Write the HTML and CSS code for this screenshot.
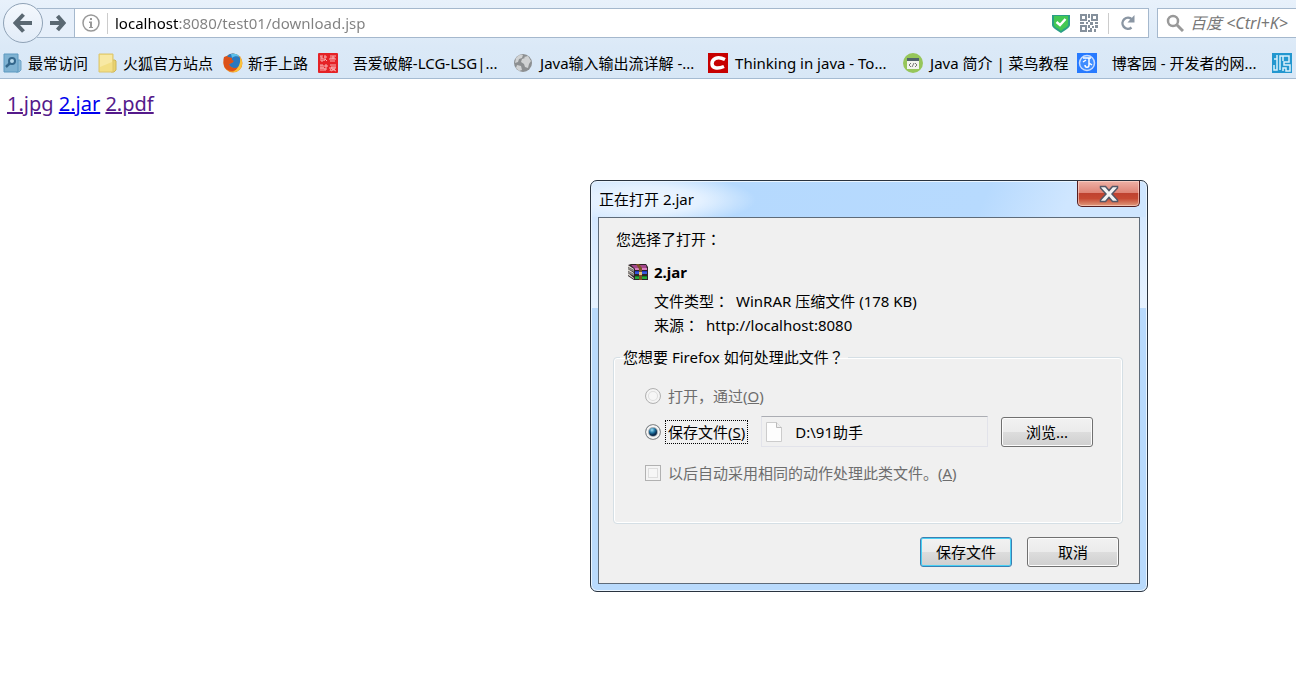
FILE: index.html
```html
<!DOCTYPE html>
<html lang="zh-CN">
<head>
    <meta charset="UTF-8">
    <meta name="viewport" content="width=device-width, initial-scale=1.0">
    <title>download.jsp</title>
    <link rel="stylesheet" href="styles.css">
</head>
<body>
    <header class="browser">
        <div class="toolbar">
            <button class="back" aria-label="后退">
                <svg width="20" height="20" viewBox="0 0 20 20"><path d="M10.500 1.500 2.500 10l8 8.500M3 10h16" fill="none" stroke="#5a6872" stroke-width="4"/></svg>
            </button>
            <button class="forward" aria-label="前进">
                <svg width="17" height="18" viewBox="0 0 17 18"><path d="M8.500 2l6 7-6 7M14 9H1" fill="none" stroke="#5a6872" stroke-width="4"/></svg>
            </button>
            <div class="urlbar">
                <svg width="18" height="18" viewBox="0 0 18 18"><circle cx="9" cy="9" r="8" fill="none" stroke="#999" stroke-width="1.500"/><path d="M8 4h2v2H8zM7 7.500h3V13h1v1H7v-1h1V9H7z" fill="#999"/></svg>
                <span class="divider"></span>
                <input class="url" type="text" aria-label="地址" value="localhost:8080/test01/download.jsp">
                <div class="url-icons">
                    <svg width="18" height="19" viewBox="0 0 18 19"><path d="M0 1h18v10c0 3-5 5-9 8-4-3-9-5-9-8z" fill="#2a9f86"/><path d="M2 2h14v9c0 2-4 3-7 6-3-3-7-4-7-6z" fill="#42c853"/><path d="M4.500 8 8 11l5.500-6" fill="none" stroke="#fff" stroke-width="2.500"/></svg>
                    <svg width="18" height="18" viewBox="0 0 18 18"><path d="M1 1h5v5H1zM12 1h5v5h-5zM1 12h5v5H1z" fill="none" stroke="#85909c" stroke-width="2"/><path d="M8 0h2v4H8zM8 6h2v2H8zM0 8h4v2H0zM6 8h2v2H6zM10 8h3v3h-3zM15 8h3v2h-3zM8 11h2v3H8zM12 12h2v2h-2zM15 11h3v3h-3zM10 14h2v4h-2zM8 16h2v2H8zM14 15h2v3h-2z" fill="#85909c"/></svg>
                    <span class="divider"></span>
                </div>
                <button class="reload" aria-label="刷新">
                    <svg width="16" height="16" viewBox="0 0 16 16"><path d="M11.500 12.500A5.500 5.500 0 1 1 12 4.500" fill="none" stroke="#8a96a3" stroke-width="2.500"/><path d="M14.500 0v7.500H7.500z" fill="#8a96a3"/></svg>
                </button>
            </div>
            <div class="search">
                <svg width="18" height="18" viewBox="0 0 18 18"><circle cx="7" cy="7" r="5" fill="none" stroke="#999" stroke-width="2.500"/><path d="m11 11 6 6" stroke="#999" stroke-width="3"/></svg>
                <input type="text" aria-label="搜索" placeholder="百度 &lt;Ctrl+K&gt;">
            </div>
        </div>
        <nav class="bookmarks">
            <a href="#" class="bookmark">
                <svg width="20" height="20" viewBox="0 0 20 20"><path d="M13 7h4l1 1v9l-2 2h-3z" fill="#8db9d5" stroke="#6fa5c8"/><path d="M1 1h14v18H1z" fill="#7fb2d2" stroke="#5c99c0"/><circle cx="9" cy="8" r="3" fill="#b8d9ec" stroke="#34678c" stroke-width="2"/><path d="m7 10-4 4" stroke="#34678c" stroke-width="2.500"/></svg>
                <span>最常访问</span>
            </a>
            <a href="#" class="bookmark">
                <svg width="20" height="20" viewBox="0 0 20 20"><path d="M13 7h4l1 1v9l-2 2h-3z" fill="#e9d26d" stroke="#cdb65b"/><path d="M1 1h14v18H1z" fill="#f3df85" stroke="#dcc56c"/><path d="M2 2h12v7L2 14z" fill="#f8e9a4"/></svg>
                <span>火狐官方站点</span>
            </a>
            <a href="#" class="bookmark">
                <svg width="20" height="20" viewBox="0 0 20 20"><circle cx="10" cy="10" r="9.500" fill="#f08a24"/><path d="M7 1c5-2 11 2 11 8 0 4-3 6-6 6-4 0-6-2-6-4l4-2-2-4-4-1c0-1 1-2 3-3z" fill="#2b78bf"/><path d="M8 1c4-1 7 0 9 3-3-1-6-1-8 1z" fill="#5cc0ea"/><path d="M1 4l3-1 1 1 4 1v2l2 1-2 2-3 1c1 4 6 5 10 3-3 5-10 5-14 1C0 12 0 7 1 4z" fill="#dc5119"/><path d="M17 4c3 4 3 10-1 13-2 2-4 2-6 2 5-3 8-8 7-15z" fill="#fbc33a"/></svg>
                <span>新手上路</span>
            </a>
            <a href="#" class="bookmark bookmark-long">
                <svg width="20" height="20" viewBox="0 0 20 20"><rect width="20" height="20" rx="1" fill="#e52226"/><path d="M2 3h3M3 3v5h2V5H3M6 4h3M7 2v4l2 2M7 6 6 8M12 3h6M15 3v3M12 5h5M11 6h7M12 8h5M2 12h3M3 12v6M2 15h4M5 12v6M7 12h2v2H7zM6 16h3M7 15v3M12 12h6M13 14h5M11 15h7M14 14l-2 4M14 16h3l-4 2M14 16l4 2" fill="none" stroke="#f9b1b1"/></svg>
                <span>&nbsp; 吾爱破解-LCG-LSG|...</span>
            </a>
            <a href="#" class="bookmark bookmark-long">
                <svg width="20" height="20" viewBox="0 0 20 20"><circle cx="10" cy="10" r="9" fill="#8c8f91"/><path d="M3 5c2-3 5-4 7-3l-1 3-3 1-1 3-3 1zM11 4l4-1 3 5-2 3-1 4-3-1-1-3-3-2 1-3 3-1zM4 12l4 1 1 4-3 1-3-3z" fill="#d0d2d3"/></svg>
                <span>Java输入输出流详解 -...</span>
            </a>
            <a href="#" class="bookmark bookmark-long">
                <svg width="20" height="20" viewBox="0 0 20 20"><path d="M0 0h20v20H0z" fill="#c70000"/><path d="M17 6.500C9 2.500 4 6 4 10.500s5 6 12 3" fill="none" stroke="#fff" stroke-width="3.500"/></svg>
                <span>Thinking in java - To...</span>
            </a>
            <a href="#" class="bookmark bookmark-wide">
                <svg width="20" height="20" viewBox="0 0 20 20"><circle cx="10" cy="10" r="10" fill="#96c65a"/><path d="M4 5h12v11H4z" fill="#f2f4ee"/><path d="M4 5h12v3H4z" fill="#51636a"/><path d="m8 10-2 2 2 2M12 10l2 2-2 2M11 10l-2 4" fill="none" stroke="#777"/></svg>
                <span>Java 简介 | 菜鸟教程</span>
            </a>
            <a href="#" class="bookmark bookmark-long">
                <svg width="20" height="20" viewBox="0 0 20 20"><path d="M0 0h20v20H0z" fill="#277aff"/><circle cx="10" cy="10" r="7.500" fill="#3f8dff" stroke="#c7dcff" stroke-width="1.500"/><path d="M6 5h8M12 5v7c0 3-4 3-4 0M6 9l3-2M12 10l3 2" fill="none" stroke="#fff" stroke-width="1.500"/></svg>
                <span>&nbsp; 博客园 - 开发者的网...</span>
            </a>
            <a href="#" class="bookmark" aria-label="书签">
                <svg width="20" height="20" viewBox="0 0 20 20"><path d="M0 0h20v20H0z" fill="#2397cf"/><path d="M5 2v4H2M5 6v11H2v-5M8 17V3h9v6h-5v3h6v6h-4v-3h-3v3M11 3v5" fill="none" stroke="#d9f1fb" stroke-width="1.500"/></svg>
            </a>
        </nav>
    </header>

    <main class="page">
        <a href="#" class="visited">1.jpg</a>
        <a href="#">2.jar</a>
        <a href="#" class="visited">2.pdf</a>
    </main>

    <section class="dialog" role="dialog" aria-labelledby="dialogTitle">
        <div class="titlebar">
            <h1 id="dialogTitle">正在打开 2.jar</h1>
            <button class="close" aria-label="关闭">
                <svg width="20" height="18" viewBox="0 0 20 18"><path d="M1.500 1.500h5L10 5.500l3.500-4h5V3L13 9l5.500 6v1.500h-5l-3.500-4-3.500 4h-5V15L7 9 1.500 3z" fill="#f3f3f3" stroke="#535666" stroke-width="1.500"/></svg>
            </button>
        </div>
        <form class="dialog-body">
            <p class="intro">您选择了打开<span class="punct" lang="zh-TW">：</span></p>
            <div class="file">
                <svg width="20" height="16" viewBox="0 0 20 16"><path d="M0 1 3 0h15l2 3v13H6l-6-4z" fill="#2c2328"/><path d="M0 1l6 4v1L0 3zM0 5l6 4v1L0 7zM0 9l6 5v1l-6-4z" fill="#dedad2"/><path d="M0 3l6 3v2L0 5zM0 7l6 3v2L0 9z" fill="#8d8a86"/><path d="M3 1h15l1 4H7z" fill="#a2468a"/><path d="M7 5h12" stroke="#d77ec0" stroke-width="2"/><path d="M7 7h12v3H7z" fill="#1e35c4"/><path d="M7 9h12" stroke="#4f7ff0"/><path d="M7 12h12v3H7z" fill="#128526"/><path d="M7 14h12" stroke="#3fd04f"/><path d="M8 0h3l3 4v12h-3V5z" fill="#7c5226"/><path d="M11 8h3v3h-3z" fill="#e3c07c"/></svg>
                <strong>2.jar</strong>
            </div>
            <dl class="details">
                <div><dt>文件类型<span class="punct" lang="zh-TW">：</span></dt><dd>WinRAR 压缩文件 (178 KB)</dd></div>
                <div><dt>来源<span class="punct" lang="zh-TW">：</span></dt><dd>http://localhost:8080</dd></div>
            </dl>
            <fieldset>
                <legend>您想要 Firefox 如何处理此文件<span class="punct" lang="zh-TW">？</span></legend>
                <div class="option">
                    <input type="radio" name="mode" id="modeOpen" disabled>
                    <label for="modeOpen">打开，通过(<u>O</u>)</label>
                </div>
                <div class="option option-save">
                    <input type="radio" name="mode" id="modeSave" checked>
                    <label for="modeSave" class="focused">保存文件(<u>S</u>)</label>
                    <div class="folder">
                        <svg width="16" height="20" viewBox="0 0 16 20"><path d="M.5.500h10l5 5v14H.500z" fill="#fdfdfd" stroke="#ccc"/><path d="M10.500.500v5h5" fill="#eee" stroke="#bbb"/></svg>
                        <input type="text" aria-label="保存位置" value="D:\91助手" readonly>
                    </div>
                    <button type="button" class="btn">浏览...</button>
                </div>
                <div class="option">
                    <input type="checkbox" id="remember" disabled>
                    <label for="remember">以后自动采用相同的动作处理此类文件。(<u>A</u>)</label>
                </div>
            </fieldset>
            <div class="actions">
                <button type="button" class="btn btn-default">保存文件</button>
                <button type="button" class="btn">取消</button>
            </div>
        </form>
    </section>
</body>
</html>
```
FILE: styles.css
```css
* {
    box-sizing: border-box;
}

body {
    margin: 0;
    background-color: #fff;
    color: #000;
    font-family: "Noto Sans", "Noto Sans CJK SC", sans-serif;
    font-size: 15px;
    line-height: 24px;
    overflow: hidden;
}

button, input {
    font: inherit;
    color: inherit;
    margin: 0;
}

svg {
    flex: none;
    display: block;
}

/* Barra del navegador */
.browser {
    background: linear-gradient(#e8f1fb, #dbe9f7 60%, #d8e7f6);
    border-bottom: 1px solid #a5bbd2;
}

.toolbar {
    display: flex;
    align-items: center;
    height: 46px;
    padding-left: 3px;
}

.back {
    position: relative;
    z-index: 1;
    display: flex;
    align-items: center;
    justify-content: center;
    width: 40px;
    height: 40px;
    padding: 0;
    border: 1px solid #8fa2b6;
    border-radius: 50%;
    background: linear-gradient(#f4f8fd, #e2ecf8);
}

.forward {
    display: flex;
    align-items: center;
    justify-content: flex-end;
    width: 37px;
    height: 30px;
    margin-left: -6px;
    padding: 0 8px 0 0;
    border: 1px solid #a5b8cd;
    border-left: none;
    border-right: none;
    background-color: #e6effa;
}

.urlbar {
    flex: 1;
    display: flex;
    align-items: center;
    gap: 7px;
    height: 30px;
    padding: 0 12px 0 7px;
    border: 1px solid #a5b8cd;
    background-color: #fff;
}

.url-icons {
    display: flex;
    align-items: center;
    gap: 10px;
}

.divider {
    width: 1px;
    height: 21px;
    background-color: #ccc;
}

.url {
    flex: 1;
    min-width: 0;
    padding: 0;
    border: none;
    outline: none;
    color: transparent;
    background: linear-gradient(90deg, #000 64px, #808080 64px);
    background-clip: text;
    -webkit-background-clip: text;
}

.reload {
    padding: 0 0 0 4px;
    border: none;
    background: none;
}

.search {
    display: flex;
    align-items: center;
    gap: 6px;
    width: 139px;
    height: 30px;
    margin-left: 8px;
    padding-left: 8px;
    border: 1px solid #a5b8cd;
    border-right: none;
    background-color: #fff;
}

.search input {
    flex: 1;
    min-width: 0;
    padding: 0;
    border: none;
    outline: none;
    background: none;
    font-size: 16px;
}

.search input::placeholder {
    color: #777;
    font-style: italic;
}

.bookmarks {
    display: flex;
    gap: 10px;
    height: 32px;
    padding: 2px 0 0 3px;
    overflow: hidden;
}

.bookmark {
    display: flex;
    align-items: center;
    flex: none;
    gap: 5px;
    color: #000;
    text-decoration: none;
    white-space: nowrap;
}

.bookmark-long {
    width: 185px;
    gap: 7px;
}

.bookmark-wide {
    width: 164px;
    gap: 7px;
}

/* Pagina */
.page {
    padding: 10px 7px;
    font-size: 20px;
    line-height: 30px;
}

.page a {
    color: #00e;
}

.page .visited {
    color: #551a8b;
}

/* Dialogo */
.dialog {
    position: absolute;
    top: 180px;
    left: 590px;
    width: 558px;
    padding: 0 7px 7px;
    border: 1px solid #29333f;
    border-radius: 7px;
    background:
        radial-gradient(110px 26px at 55px 19px, #edf6ff, #e4f1ff 50%, transparent) top / 100% 36px no-repeat,
        linear-gradient(115deg, #d3e8ff, #b5d9fe 25%, #b7dafe 70%, #cfe6ff 85%) top / 100% 36px no-repeat,
        linear-gradient(#cde4ff, #e6f2ff) top / 100% 127px no-repeat,
        #b9dafc;
    box-shadow: inset 0 0 0 1px #eaf5ff;
}

.titlebar {
    display: flex;
    justify-content: space-between;
    align-items: flex-start;
    height: 36px;
}

.titlebar h1 {
    margin: 0;
    padding-left: 1px;
    font-size: 15px;
    font-weight: normal;
    line-height: 36px;
}

.close {
    display: flex;
    align-items: center;
    justify-content: center;
    width: 63px;
    height: 26px;
    padding: 0;
    border: 1px solid #541e21;
    border-top: none;
    border-radius: 0 0 5px 5px;
    background: linear-gradient(#eeb1a6, #df8577 46%, #bf4230 50%, #c64933 70%, #e09a7c);
    box-shadow: inset 0 0 0 1px rgba(255, 220, 210, 0.6);
}

.dialog-body {
    padding: 9px 16px 16px 14px;
    border: 1px solid #5e6b79;
    background-color: #f0f0f0;
}

.punct {
    font-family: "Noto Sans CJK TC", sans-serif;
    line-height: 1;
}

.intro {
    margin: 0 0 9px;
    padding-left: 3px;
}

.file {
    display: flex;
    align-items: center;
    gap: 6px;
    margin-bottom: 5px;
    padding-left: 15px;
}

.details {
    margin: 0 0 8px;
    padding-left: 41px;
}

.details div {
    display: flex;
    gap: 7px;
}

.details dd {
    margin: 0;
}

fieldset {
    min-width: 0;
    margin: 0;
    padding: 15px 29px 38px 31px;
    border: 1px solid #d5dfe5;
    border-radius: 4px;
    box-shadow: inset 0 0 0 1px #fff;
}

legend {
    margin-left: -25px;
    padding: 0 4px 0 3px;
}

.option {
    display: flex;
    align-items: center;
    gap: 4px;
    color: #6d6d6d;
}

.option-save {
    margin: 8px 0 14px;
    color: #000;
}

.option label {
    padding: 0 2px;
    border: 1px dotted transparent;
    line-height: 22px;
    white-space: nowrap;
}

.option .focused {
    border-color: #000;
}

.option input[type="radio"],
.option input[type="checkbox"] {
    appearance: none;
    flex: none;
    width: 16px;
    height: 16px;
    border: 1px solid #b1b1b1;
    background: #f6f6f6;
    box-shadow: inset 0 0 0 2px #f4f4f4, inset 0 0 0 3px #ddd;
}

.option input[type="radio"] {
    border-radius: 50%;
}

.option input[type="radio"]:checked {
    border-color: #8e8f8f;
    background: radial-gradient(circle at 6px 5px, #9fe0f5, #1b6f9e 3px, #0b2c4e 5px);
    box-shadow: inset 0 0 0 2px #f4f4f4, inset 0 0 0 3px #a5acb2;
}

.folder {
    flex: 1;
    display: flex;
    align-items: center;
    gap: 13px;
    min-width: 0;
    height: 31px;
    margin: 0 9px;
    padding-left: 4px;
    border: 1px solid #e2e3ea;
    border-top-color: #abadb3;
}

.folder input {
    flex: 1;
    min-width: 0;
    padding: 0;
    border: none;
    outline: none;
    background: none;
}

.btn {
    width: 92px;
    height: 30px;
    padding: 0;
    border: 1px solid #707070;
    border-radius: 3px;
    background: linear-gradient(#f2f2f2, #ebebeb 49%, #dddddd 50%, #cfcfcf);
    box-shadow: inset 0 0 0 1px #fcfcfc;
    line-height: 28px;
}

.btn-default {
    border-color: #3c7fb1;
    box-shadow: inset 0 0 0 1px #48d0f5;
}

.actions {
    display: flex;
    justify-content: flex-end;
    gap: 15px;
    margin-top: 13px;
    padding-right: 4px;
}
```
